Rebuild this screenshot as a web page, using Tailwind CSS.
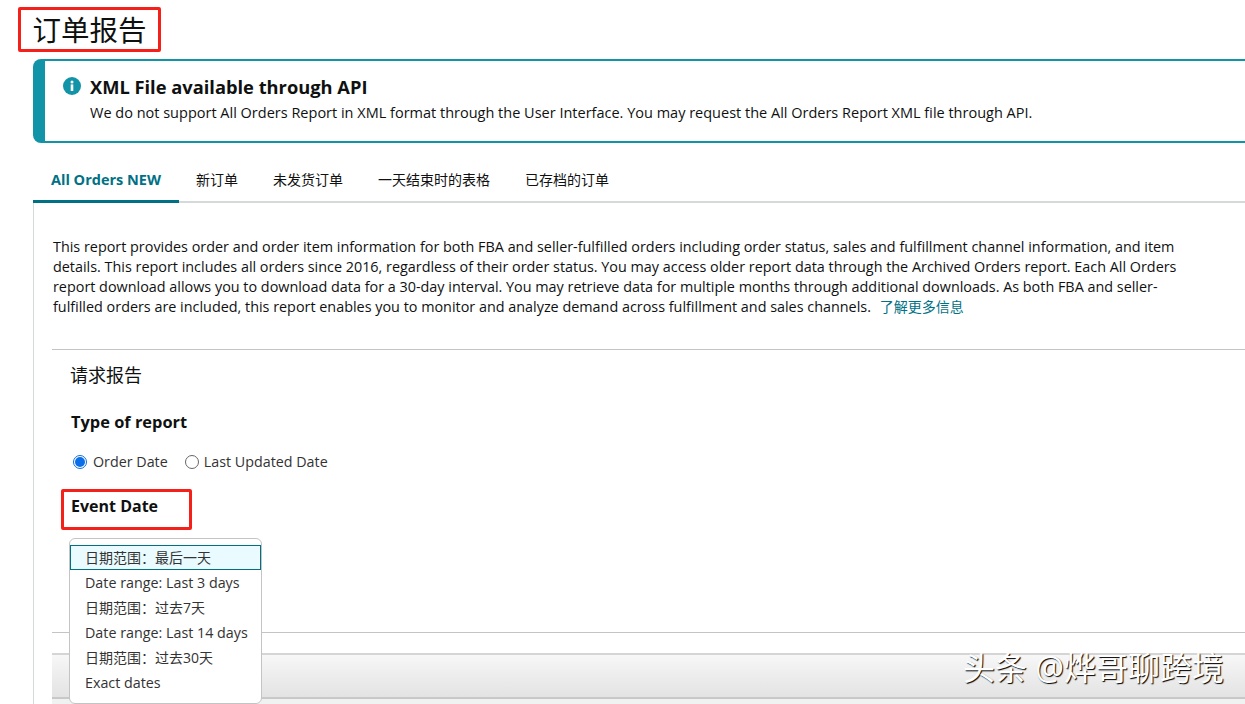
<!DOCTYPE html>
<html lang="zh">
<head>
  <meta charset="UTF-8" />
  <title>订单报告</title>
  <script src="https://cdn.jsdelivr.net/npm/@tailwindcss/browser@4"></script>
</head>
<body class="relative h-[704px] w-[1245px] overflow-hidden bg-white text-[#0f1111] font-['Open_Sans','Noto_Sans_CJK_SC',sans-serif] text-[14.5px]">

  <!-- Title -->
  <div class="pl-[18px] pt-[7px]">
    <div class="flex h-[45px] w-[143px] items-center justify-center rounded-[2px] border-[3px] border-[#f5201a] pt-[2px]">
      <h1 class="text-[28.5px] font-normal leading-none">订单报告</h1>
    </div>
  </div>

  <div class="ml-[33px] mt-[7px]">
    <!-- Alert -->
    <div class="flex h-[84px] gap-[9px] rounded-l-[8px] border-y-2 border-l-[12px] border-[#1193a8] pl-[18px] pt-[14px]">
      <svg class="mt-[2px] h-[18px] w-[18px] shrink-0" viewBox="0 0 18 18">
        <circle cx="9" cy="9" r="9" fill="#1193a8" />
        <rect x="7.7" y="7.4" width="2.6" height="6.6" fill="#fff" />
        <circle cx="9" cy="4.9" r="1.5" fill="#fff" />
      </svg>
      <div>
        <h2 class="text-[18.3px] font-bold leading-[24px]">XML File available through API</h2>
        <p class="mt-[4px] leading-[20px]">We do not support All Orders Report in XML format through the User Interface. You may request the All Orders Report XML file through API.</p>
      </div>
    </div>

    <!-- Tabs -->
    <div class="mt-[17px] flex h-[43px] items-stretch border-b-2 border-[#d5d9d9] text-[14px]">
      <div class="-mb-[2px] flex w-[146px] items-center justify-center border-b-[3px] border-[#007185] pb-[1px] text-[14.5px] font-bold text-[#007185]">All Orders NEW</div>
      <div class="flex items-center pb-[3px] pl-[17px]">新订单</div>
      <div class="flex items-center pb-[3px] pl-[35px]">未发货订单</div>
      <div class="flex items-center pb-[3px] pl-[35px]">一天结束时的表格</div>
      <div class="flex items-center pb-[3px] pl-[35px]">已存档的订单</div>
    </div>

    <!-- Panel -->
    <div class="border-l border-[#d5d9d9] pl-[18px]">
      <p class="ml-[1px] w-[1125px] pt-[34px] text-[14.38px] leading-[20px]">This report provides order and order item information for both FBA and seller-fulfilled orders including order status, sales and fulfillment channel information, and item details. This report includes all orders since 2016, regardless of their order status. You may access older report data through the Archived Orders report. Each All Orders report download allows you to download data for a 30-day interval. You may retrieve data for multiple months through additional downloads. As both FBA and seller-fulfilled orders are included, this report enables you to monitor and analyze demand across fulfillment and sales channels. <span class="ml-[5px] text-[14px] text-[#007185]">了解更多信息</span></p>

      <div class="mt-[32px] h-[284px] border-y border-[#c4c4c4] pl-[18px]">
        <h3 class="pt-[13px] text-[18px] font-normal leading-[24px]">请求报告</h3>
        <h4 class="ml-[1px] mt-[24px] text-[16.4px] font-bold leading-[22px]">Type of report</h4>
        <div class="ml-[1px] mt-[19px] flex items-center text-[14.3px]">
          <span class="ml-[2px] flex h-[14px] w-[14px] items-center justify-center rounded-full border border-[#0a6ee8]"><span class="h-[10px] w-[10px] rounded-full bg-[#0a6ee8]"></span></span>
          <span class="ml-[6px] leading-[20px] text-[#333]">Order Date</span>
          <span class="ml-[17px] h-[14px] w-[14px] rounded-full border border-[#666]"></span>
          <span class="ml-[5px] leading-[20px] text-[#333]">Last Updated Date</span>
        </div>
        <!-- Event Date, boxed in red -->
        <div class="-ml-[9px] mt-[17px] h-[41px] w-[131px] rounded-[2px] border-[3px] border-[#f5201a] pl-[7px] pt-[3px]">
          <h4 class="text-[16px] font-bold leading-[22px]">Event Date</h4>
        </div>
      </div>

      <div class="mt-[20px] h-[46px] border-y-2 border-t-[#d5d5d5] border-b-[#c8c8c8] bg-gradient-to-b from-[#f7f7f7] to-[#e3e3e3]"></div>
      <div class="h-[10px] bg-[#f0f2f2]"></div>
    </div>
  </div>

  <!-- Date range dropdown -->
  <div class="absolute left-[69px] top-[538px] h-[166px] w-[193px] rounded-[6px] border border-[#c4c4c4] bg-white pt-[6px] text-[14.3px] text-[#333]">
    <div class="flex h-[25px] items-center border border-[#007185] bg-[#e9fbff] pl-[14px] text-[14px]">日期范围：最后一天</div>
    <div class="flex h-[25px] items-center pl-[15px]">Date range: Last 3 days</div>
    <div class="flex h-[25px] items-center pl-[15px] text-[14px]">日期范围：过去7天</div>
    <div class="flex h-[25px] items-center pl-[15px]">Date range: Last 14 days</div>
    <div class="flex h-[25px] items-center pl-[15px] text-[14px]">日期范围：过去30天</div>
    <div class="flex h-[25px] items-center pl-[15px]">Exact dates</div>
  </div>

  <!-- Watermark -->
  <div class="absolute left-[963px] top-[647px] text-[32px] leading-[42px] text-white [text-shadow:1px_1px_1px_#000]">头条 @烨哥聊跨境</div>
</body>
</html>
